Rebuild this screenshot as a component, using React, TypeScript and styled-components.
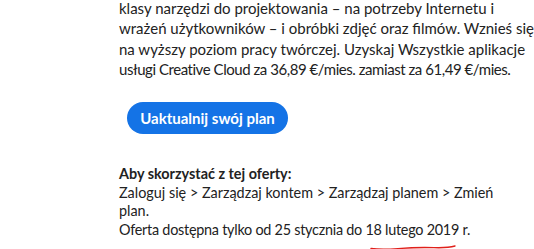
import React from "react";
import styled, { createGlobalStyle } from "styled-components";

const Global = createGlobalStyle`
  html, body {
    margin: 0;
    padding: 0;
    background: #ffffff;
  }
  body {
    font-family: Lato, "Open Sans", sans-serif;
    color: #222222;
    overflow: hidden;
  }
`;

const Page = styled.div`
  width: 534px;
  height: 249px;
  padding-left: 119px;
  box-sizing: border-box;
  overflow: hidden;
`;

const Intro = styled.div`
  margin-top: -2px;
  font-size: 15px;
  line-height: 20.3px;
  white-space: nowrap;
`;

const Line = styled.div<{ $tight?: number }>`
  letter-spacing: ${(p) => (p.$tight ? `-${p.$tight}px` : "normal")};
`;

const Button = styled.button`
  display: block;
  margin: 23px 0 0 8px;
  width: 161px;
  height: 32px;
  padding: 0;
  border: none;
  border-radius: 16px;
  background: #1473e6;
  color: #ffffff;
  font-family: inherit;
  font-size: 15px;
  font-weight: 700;
  cursor: pointer;
`;

const Offer = styled.div`
  margin-top: 31px;
  font-size: 14.4px;
  line-height: 18.5px;
  white-space: nowrap;
`;

const Heading = styled.div`
  font-weight: 700;
`;

const Marked = styled.span`
  position: relative;
`;

const Scribble = styled.svg`
  position: absolute;
  left: 5px;
  bottom: -12px;
  width: 86px;
  height: 5px;
  overflow: visible;
`;

export default function App() {
  return (
    <Page>
      <Global />
      <Intro>
        <Line>klasy narzędzi do projektowania – na potrzeby Internetu i</Line>
        <Line>wrażeń użytkowników – i obróbki zdjęć oraz filmów. Wznieś się</Line>
        <Line>na wyższy poziom pracy twórczej. Uzyskaj Wszystkie aplikacje</Line>
        <Line $tight={0.45}>
          usługi Creative Cloud za 36,89 €/mies. zamiast za 61,49 €/mies.
        </Line>
      </Intro>
      <Button>Uaktualnij swój plan</Button>
      <Offer>
        <Heading>Aby skorzystać z tej oferty:</Heading>
        <Line>Zaloguj się &gt; Zarządzaj kontem &gt; Zarządzaj planem &gt; Zmień</Line>
        <Line>plan.</Line>
        <Line $tight={0.25}>
          Oferta dostępna tylko od 25 stycznia do{" "}
          <Marked>
            18 lutego 2019
            <Scribble viewBox="0 0 86 5">
              <path
                d="M1 3.5 C 8 4.5, 16 4.6, 28 3.6 S 52 2.2, 64 2.6 S 80 2.4, 85 1"
                fill="none"
                stroke="#e0201a"
                strokeWidth="1.4"
                strokeLinecap="round"
              />
            </Scribble>
          </Marked>{" "}
          r.
        </Line>
      </Offer>
    </Page>
  );
}
